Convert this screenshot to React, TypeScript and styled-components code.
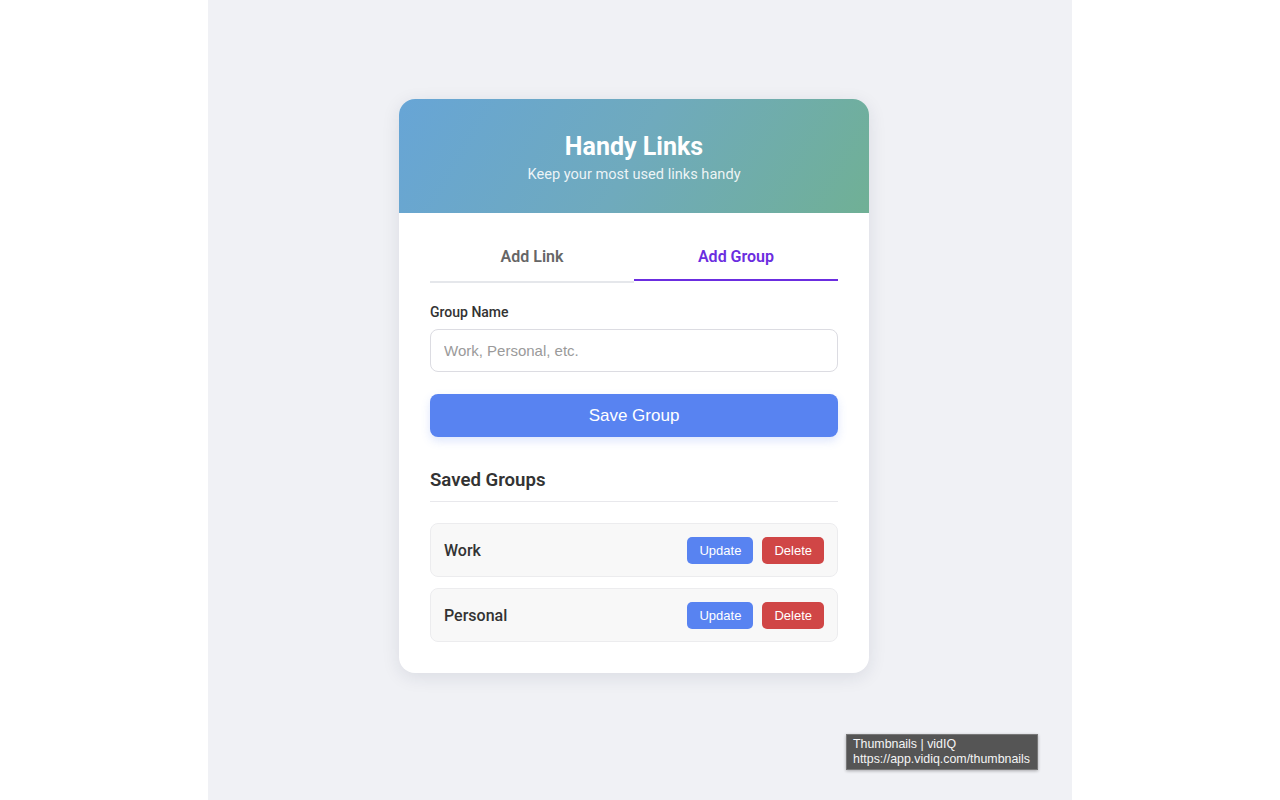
import React from 'react';
import styled, { createGlobalStyle } from 'styled-components';

const GlobalStyle = createGlobalStyle`
    html, body {
        margin: 0;
        padding: 0;
        background: #ffffff;
        font-family: Roboto, "Liberation Sans", sans-serif;
    }
`;

const Page = styled.div`
    width: 864px;
    min-height: 800px;
    margin-left: 208px;
    background: #f0f1f5;
    display: flex;
    justify-content: center;
    align-items: flex-start;
    padding-top: 99px;
    padding-right: 12px;
    box-sizing: border-box;
    position: relative;
`;

const Card = styled.div`
    width: 470px;
    background: #ffffff;
    border-radius: 16px;
    overflow: hidden;
    box-shadow: 0 4px 18px rgba(30, 40, 70, 0.1);
`;

const Header = styled.div`
    height: 114px;
    box-sizing: border-box;
    padding-top: 33px;
    background: linear-gradient(120deg, #67a5d6 0%, #6faabd 50%, #70b095 100%);
    text-align: center;
    color: #ffffff;
`;

const Title = styled.h1`
    margin: 0;
    font-size: 25px;
    font-weight: 700;
    line-height: 30px;
`;

const Subtitle = styled.p`
    margin: 2px 0 0;
    font-size: 14.6px;
    line-height: 20px;
    color: rgba(255, 255, 255, 0.88);
`;

const Body = styled.div`
    padding: 22px 31px 31px;
`;

const Tabs = styled.div`
    display: flex;
    align-items: flex-start;
`;

const Tab = styled.button<{ $active?: boolean }>`
    flex: 1;
    box-sizing: border-box;
    border: none;
    background: none;
    font-family: Roboto, sans-serif;
    font-size: 16px;
    font-weight: 600;
    height: ${({ $active }) => ($active ? '46px' : '48px')};
    padding: 0 0 ${({ $active }) => ($active ? '2px' : '4px')};
    color: ${({ $active }) => ($active ? '#6b2de0' : '#666666')};
    border-bottom: 2px solid ${({ $active }) => ($active ? '#6b2de0' : '#e5e7eb')};
    cursor: pointer;
`;

const Field = styled.div`
    margin-top: 20px;
`;

const Label = styled.label`
    display: block;
    font-size: 14px;
    font-weight: 500;
    color: #333333;
    line-height: 18px;
    margin-bottom: 8px;
`;

const Input = styled.input`
    width: 100%;
    box-sizing: border-box;
    height: 43px;
    border: 1px solid #dcdce2;
    border-radius: 8px;
    padding: 0 13px;
    font-family: "Liberation Sans", Arial, sans-serif;
    font-size: 15px;
    color: #333;
    outline: none;

    &::placeholder {
        color: #9a9a9a;
    }
`;

const SaveButton = styled.button`
    width: 100%;
    height: 43px;
    margin-top: 22px;
    border: none;
    border-radius: 8px;
    background: #5883f1;
    color: #ffffff;
    font-family: "Liberation Sans", Arial, sans-serif;
    font-size: 17px;
    box-shadow: 0 4px 10px rgba(88, 131, 241, 0.2);
    cursor: pointer;
`;

const SectionTitle = styled.h2`
    margin: 31px 0 0;
    padding-bottom: 9px;
    font-size: 18.6px;
    font-weight: 600;
    line-height: 24px;
    color: #333333;
    border-bottom: 1px solid #e8e8ec;
`;

const GroupList = styled.div`
    display: flex;
    flex-direction: column;
    gap: 11px;
    margin-top: 21px;
`;

const GroupItem = styled.div`
    display: flex;
    align-items: center;
    justify-content: space-between;
    height: 54px;
    box-sizing: border-box;
    padding: 0 13px;
    background: #f8f8f8;
    border: 1px solid #ececee;
    border-radius: 8px;
`;

const GroupName = styled.span`
    font-size: 16px;
    font-weight: 500;
    color: #333333;
`;

const Actions = styled.div`
    display: flex;
    gap: 9px;
`;

const SmallButton = styled.button<{ $variant: 'update' | 'delete' }>`
    height: 27px;
    border: none;
    border-radius: 5px;
    padding: 0 12px;
    min-width: ${({ $variant }) => ($variant === 'update' ? '66px' : '61px')};
    background: ${({ $variant }) => ($variant === 'update' ? '#5883f1' : '#d04646')};
    color: #ffffff;
    font-family: "Liberation Sans", Arial, sans-serif;
    font-size: 13px;
    cursor: pointer;
`;

const Tooltip = styled.div`
    position: absolute;
    left: 638px;
    top: 734px;
    padding: 2px 7px 2px 6px;
    background: #555555;
    border: 1px solid #777;
    color: #f4f4f4;
    font-family: "Liberation Sans", Arial, sans-serif;
    font-size: 12.4px;
    line-height: 15px;
    box-shadow: 0 1px 3px rgba(0, 0, 0, 0.3);
    white-space: nowrap;
`;

const groups = ['Work', 'Personal'];

const App = () => {
    return (
        <>
            <GlobalStyle />
            <Page>
                <Card>
                    <Header>
                        <Title>Handy Links</Title>
                        <Subtitle>Keep your most used links handy</Subtitle>
                    </Header>
                    <Body>
                        <Tabs>
                            <Tab>Add Link</Tab>
                            <Tab $active>Add Group</Tab>
                        </Tabs>
                        <Field>
                            <Label>Group Name</Label>
                            <Input placeholder="Work, Personal, etc." />
                        </Field>
                        <SaveButton>Save Group</SaveButton>
                        <SectionTitle>Saved Groups</SectionTitle>
                        <GroupList>
                            {groups.map(name => (
                                <GroupItem key={name}>
                                    <GroupName>{name}</GroupName>
                                    <Actions>
                                        <SmallButton $variant="update">Update</SmallButton>
                                        <SmallButton $variant="delete">Delete</SmallButton>
                                    </Actions>
                                </GroupItem>
                            ))}
                        </GroupList>
                    </Body>
                </Card>
                <Tooltip>
                    Thumbnails | vidIQ
                    <br />
                    https://app.vidiq.com/thumbnails
                </Tooltip>
            </Page>
        </>
    );
};

export default App;
